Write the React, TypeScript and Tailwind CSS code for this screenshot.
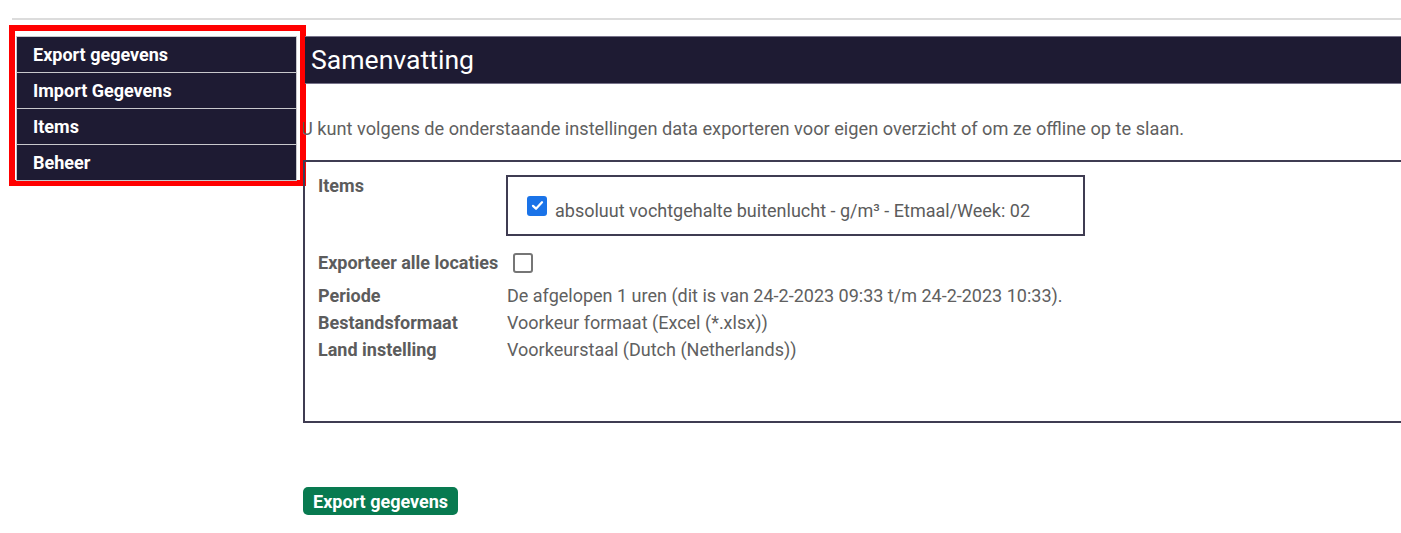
const menu = ['Export gegevens', 'Import Gegevens', 'Items', 'Beheer'];

const details = [
  { label: 'Periode', value: 'De afgelopen 1 uren (dit is van 24-2-2023 09:33 t/m 24-2-2023 10:33).' },
  { label: 'Bestandsformaat', value: 'Voorkeur formaat (Excel (*.xlsx))' },
  { label: 'Land instelling', value: 'Voorkeurstaal (Dutch (Netherlands))' },
];

export default function App() {
  return (
    <div className="h-[533px] overflow-hidden bg-white font-['Roboto',sans-serif]">
      <div className="ml-[12px] mt-[18px] border-t-2 border-[#dcdcdc]" />
      <div className="flex">
        <div className="ml-[9px] mt-[5px] h-[161px] w-[297px] shrink-0 border-[6px] border-[#ff0000] pb-px pl-px pr-[3px] pt-[5px]">
          <nav className="border-x border-t border-[#c8c8cc] bg-[#1e1b33]">
            {menu.map((item) => (
              <div
                key={item}
                className="flex h-[36px] items-center border-b border-[#c8c8cc] pl-[16px] text-[18px] font-bold text-white"
              >
                {item}
              </div>
            ))}
          </nav>
        </div>

        <main className="min-w-0 flex-1 -ml-[3px] overflow-hidden">
          <div className="ml-[2px] mt-[16px] flex h-[48px] items-center border-y border-[#77738a] bg-[#1e1b33] pl-[6px] text-[26.6px] text-white">
            Samenvatting
          </div>
          <p className="-ml-[2px] mt-[32px] whitespace-nowrap text-[18.2px] leading-[26px] text-[#606060]">
            U kunt volgens de onderstaande instellingen data exporteren voor eigen overzicht of om ze offline op te slaan.
          </p>

          <section className="mt-[18px] h-[263px] w-[1110px] border-2 border-[#3f3c52] pl-[13px] pt-[10px] text-[18px] leading-[27px]">
            <div className="flex">
              <div className="w-[188px] shrink-0 font-bold text-[#5c5c5c]">Items</div>
              <div className="mt-[3px] flex h-[61px] w-[579px] items-center border-2 border-[#3f3c52] pl-[19px]">
                <span className="mr-[8px] flex h-[20px] w-[20px] shrink-0 items-center justify-center rounded-[3px] bg-[#1a73e8]">
                  <svg viewBox="0 0 16 16" className="h-[15px] w-[15px]" fill="none">
                    <path d="M3.2 8.4 6.4 11.4 12.8 4.6" stroke="white" strokeWidth="2.4" strokeLinecap="round" strokeLinejoin="round" />
                  </svg>
                </span>
                <span className="mt-[10px] text-[#5c5c5c]">absoluut vochtgehalte buitenlucht - g/m³ - Etmaal/Week: 02</span>
              </div>
            </div>

            <div className="mt-[13px] flex items-center">
              <span className="font-bold text-[#5c5c5c]">Exporteer alle locaties</span>
              <span className="ml-[15px] mt-px h-[20px] w-[20px] rounded-[3px] border-2 border-[#767676] bg-white" />
            </div>

            <div className="mt-[6px] flex flex-col">
              {details.map((d) => (
                <div key={d.label} className="flex h-[27px] items-center">
                  <div className="w-[189px] shrink-0 font-bold text-[#5c5c5c]">{d.label}</div>
                  <div className="text-[#606060]">{d.value}</div>
                </div>
              ))}
            </div>
          </section>

          <button className="mt-[64px] h-[28px] rounded-[5px] bg-[#087a50] px-[10px] text-[18px] font-bold text-white">
            Export gegevens
          </button>
        </main>
      </div>
    </div>
  );
}
